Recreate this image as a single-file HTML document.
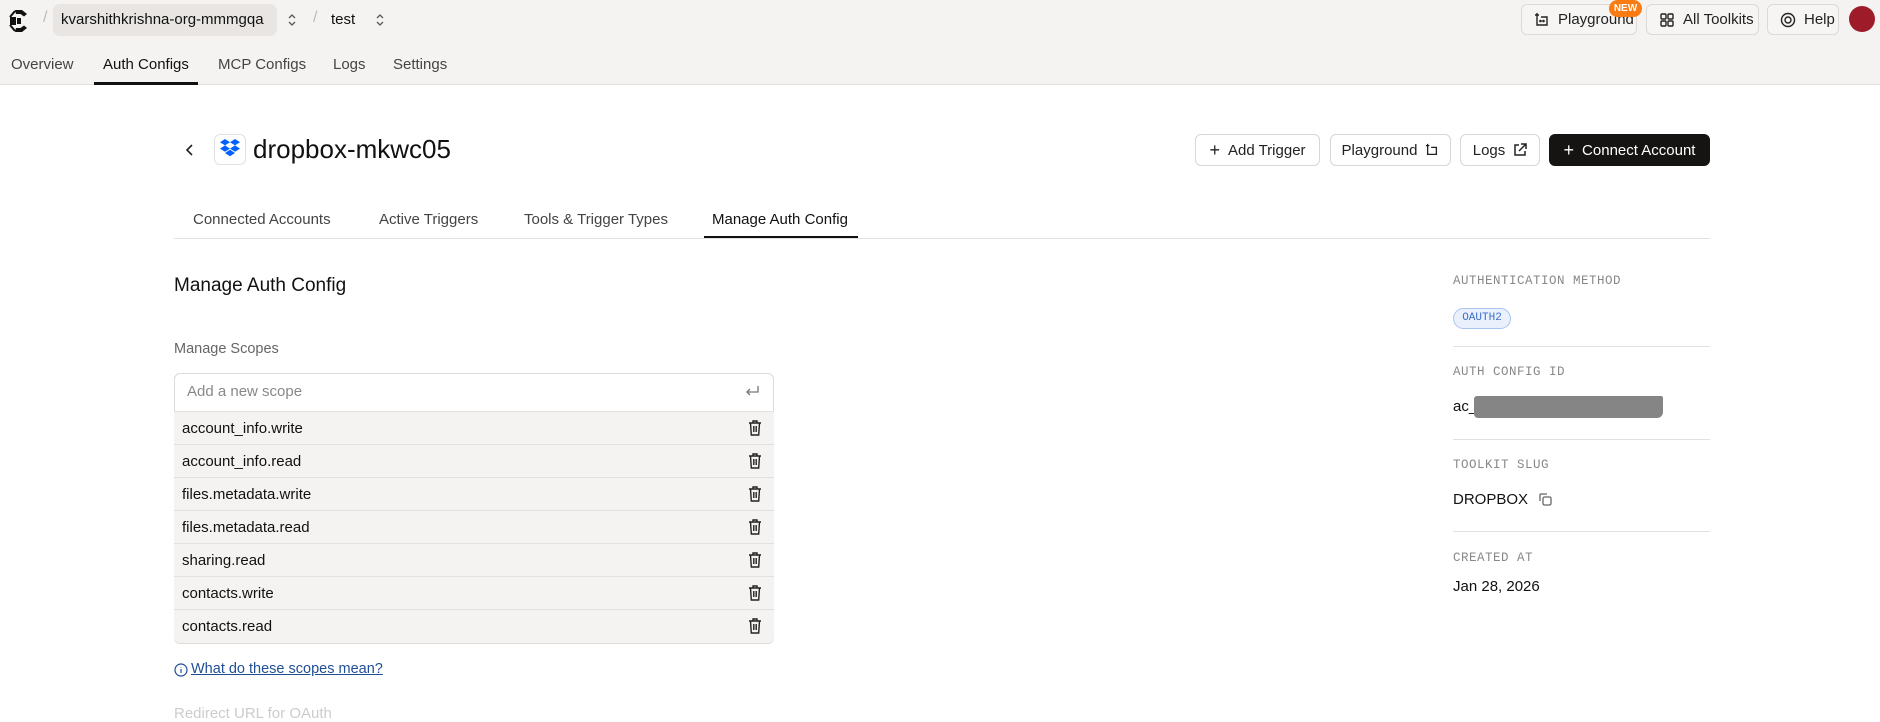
<!DOCTYPE html>
<html><head><meta charset="utf-8"><style>
*{box-sizing:border-box;margin:0;padding:0}
body{width:1880px;height:709px;overflow:hidden;background:#fff;font-family:"Liberation Sans",sans-serif;color:#111;position:relative}
.a{position:absolute}
.top{position:absolute;left:0;top:0;width:1880px;height:85px;background:#f4f3f1;border-bottom:1px solid #e2dfdc}
.nav{position:absolute;top:56px;font-size:15px;color:#444}
.hbtn{position:absolute;top:4px;height:31px;border:1px solid #dcd9d6;border-radius:6px;background:#f6f5f3;font-size:15px;color:#222;display:flex;align-items:center;padding-left:12px;gap:8px}
.btn{position:absolute;top:134px;height:32px;border:1px solid #d9d6d3;border-radius:6px;background:#fff;font-size:15px;color:#222;display:flex;align-items:center;justify-content:center;gap:8px}
.tab{position:absolute;top:211px;font-size:15px;color:#444}
.lab{position:absolute;left:1453px;font-family:"Liberation Mono",monospace;font-size:12.5px;color:#888;letter-spacing:0.5px}
.val{position:absolute;left:1453px;font-size:15px;color:#111}
.hr{position:absolute;left:1453px;width:257px;height:1px;background:#e3e1df}
.row{position:absolute;left:174px;width:600px;height:33px;background:#f4f3f1;border-top:1px solid #e3e1df;font-size:15px;display:flex;align-items:center;padding-left:8px}
.row svg{position:absolute;right:12px;top:8px}
</style></head><body>
<div class="top"></div>
<svg class="a" style="left:8px;top:9px" width="22" height="24" viewBox="0 0 22 24"><path d="M7 1h7l5 4-3 2.5L12.5 5H8z M2 8h6v8H2z M8 19h4.5l3.5-2.5 3 2.5-5 4H7z M9 9h4v6H9z" fill="#111"/><path d="M2 8l5-6M2 16l5 6" stroke="#111" stroke-width="2"/></svg>
<div class="a" style="left:43px;top:9px;color:#bbb;font-size:16px">/</div>
<div class="a" style="left:53px;top:4px;width:224px;height:32px;background:#e8e5e2;border-radius:7px"></div>
<div class="a" style="left:61px;top:11px;font-size:15px;color:#111">kvarshithkrishna-org-mmmgqa</div>
<svg class="a" style="left:286px;top:13px" width="12" height="14" viewBox="0 0 12 14"><path d="M3 5l3-3 3 3M3 9l3 3 3-3" stroke="#555" stroke-width="1.3" fill="none"/></svg>
<div class="a" style="left:313px;top:9px;color:#bbb;font-size:16px">/</div>
<div class="a" style="left:331px;top:11px;font-size:15px;color:#111">test</div>
<svg class="a" style="left:374px;top:13px" width="12" height="14" viewBox="0 0 12 14"><path d="M3 5l3-3 3 3M3 9l3 3 3-3" stroke="#555" stroke-width="1.3" fill="none"/></svg>
<div class="nav" style="left:11px">Overview</div>
<div class="nav" style="left:103px;color:#111">Auth Configs</div>
<div class="a" style="left:94px;top:82px;width:104px;height:3px;background:#111"></div>
<div class="nav" style="left:218px">MCP Configs</div>
<div class="nav" style="left:333px">Logs</div>
<div class="nav" style="left:393px">Settings</div>

<div class="hbtn" style="left:1521px;width:116px"><svg width="16" height="16" viewBox="0 0 16 16" fill="none" stroke="#222" stroke-width="1.4"><path d="M3 5v8h10V5H7M3 1v4M1 3h4"/><circle cx="6.5" cy="9" r=".6" fill="#222"/><circle cx="9.5" cy="9" r=".6" fill="#222"/></svg>Playground</div>
<div class="a" style="left:1609px;top:0;width:33px;height:17px;background:#f97b12;border-radius:9px;color:#fff;font-size:10px;font-weight:bold;text-align:center;line-height:17px">NEW</div>
<div class="hbtn" style="left:1646px;width:113px"><svg width="16" height="16" viewBox="0 0 16 16" fill="none" stroke="#222" stroke-width="1.4"><rect x="2" y="2" width="5" height="5" rx="1"/><rect x="9" y="2" width="5" height="5" rx="1"/><rect x="2" y="9" width="5" height="5" rx="1"/><rect x="9" y="9" width="5" height="5" rx="1"/></svg>All Toolkits</div>
<div class="hbtn" style="left:1767px;width:72px"><svg width="16" height="16" viewBox="0 0 16 16" fill="none" stroke="#222" stroke-width="1.4"><circle cx="8" cy="8" r="6.5"/><circle cx="8" cy="8" r="3"/></svg>Help</div>
<div class="a" style="left:1849px;top:6px;width:26px;height:26px;border-radius:50%;background:#9e1b2a"></div>

<svg class="a" style="left:184px;top:143px" width="12" height="14" viewBox="0 0 12 14"><path d="M8 2L3 7l5 5" stroke="#222" stroke-width="1.6" fill="none"/></svg>
<div class="a" style="left:214px;top:134px;width:32px;height:31px;border:1px solid #e3e1df;border-radius:6px;background:#fff"></div>
<svg class="a" style="left:219px;top:139px" width="22" height="21" viewBox="0 0 22 21"><path fill="#0061fe" d="M6 0l5 3.2-5 3.2-5-3.2zM16 0l5 3.2-5 3.2-5-3.2zM1 9.6l5-3.2 5 3.2-5 3.2zM16 6.4l5 3.2-5 3.2-5-3.2zM6 14l5-3.2 5 3.2-5 3.2z"/></svg>
<div class="a" style="left:253px;top:134px;font-size:26px;color:#111">dropbox-mkwc05</div>

<div class="btn" style="left:1195px;width:125px"><span style="font-size:18px">+</span>Add Trigger</div>
<div class="btn" style="left:1330px;width:121px">Playground <svg width="14" height="14" viewBox="0 0 16 16" fill="none" stroke="#222" stroke-width="1.5"><path d="M3 5v8h10V5H7M3 1v4M1 3h4"/></svg></div>
<div class="btn" style="left:1460px;width:80px">Logs <svg width="14" height="14" viewBox="0 0 14 14" fill="none" stroke="#222" stroke-width="1.5"><path d="M6 2H2v10h10V8M8 1h5v5M13 1L6 8"/></svg></div>
<div class="btn" style="left:1549px;width:161px;background:#161412;border-color:#161412;color:#fff"><span style="font-size:18px">+</span>Connect Account</div>

<div class="tab" style="left:193px">Connected Accounts</div>
<div class="tab" style="left:379px">Active Triggers</div>
<div class="tab" style="left:524px">Tools &amp; Trigger Types</div>
<div class="tab" style="left:712px;color:#111">Manage Auth Config</div>
<div class="a" style="left:174px;top:238px;width:1536px;height:1px;background:#e3e1df"></div>
<div class="a" style="left:704px;top:236px;width:154px;height:2px;background:#111"></div>

<div class="a" style="left:174px;top:275px;font-size:19px;color:#111">Manage Auth Config</div>
<div class="a" style="left:174px;top:341px;font-size:14.5px;color:#666">Manage Scopes</div>
<div class="a" style="left:174px;top:373px;width:600px;height:271px;border:1px solid #dedbd8;border-radius:6px;background:#f4f3f1;overflow:hidden"></div>
<div class="a" style="left:175px;top:374px;width:598px;height:37px;background:#fff;border-radius:6px 6px 0 0"></div>
<div class="a" style="left:187px;top:383px;font-size:15px;color:#888">Add a new scope</div>
<svg class="a" style="left:744px;top:385px" width="16" height="14" viewBox="0 0 16 14"><path d="M14 1v6H3M6 4L3 7l3 3" stroke="#777" stroke-width="1.3" fill="none"/></svg>

<div class="row" style="top:411px">account_info.write<svg width="14" height="16" viewBox="0 0 14 16" fill="none" stroke="#222" stroke-width="1.4"><path d="M1 3h12M5 3V1h4v2M2.5 3l.8 12h7.4l.8-12M5.8 6v6M8.2 6v6"/></svg></div>
<div class="row" style="top:444px">account_info.read<svg width="14" height="16" viewBox="0 0 14 16" fill="none" stroke="#222" stroke-width="1.4"><path d="M1 3h12M5 3V1h4v2M2.5 3l.8 12h7.4l.8-12M5.8 6v6M8.2 6v6"/></svg></div>
<div class="row" style="top:477px">files.metadata.write<svg width="14" height="16" viewBox="0 0 14 16" fill="none" stroke="#222" stroke-width="1.4"><path d="M1 3h12M5 3V1h4v2M2.5 3l.8 12h7.4l.8-12M5.8 6v6M8.2 6v6"/></svg></div>
<div class="row" style="top:510px">files.metadata.read<svg width="14" height="16" viewBox="0 0 14 16" fill="none" stroke="#222" stroke-width="1.4"><path d="M1 3h12M5 3V1h4v2M2.5 3l.8 12h7.4l.8-12M5.8 6v6M8.2 6v6"/></svg></div>
<div class="row" style="top:543px">sharing.read<svg width="14" height="16" viewBox="0 0 14 16" fill="none" stroke="#222" stroke-width="1.4"><path d="M1 3h12M5 3V1h4v2M2.5 3l.8 12h7.4l.8-12M5.8 6v6M8.2 6v6"/></svg></div>
<div class="row" style="top:576px">contacts.write<svg width="14" height="16" viewBox="0 0 14 16" fill="none" stroke="#222" stroke-width="1.4"><path d="M1 3h12M5 3V1h4v2M2.5 3l.8 12h7.4l.8-12M5.8 6v6M8.2 6v6"/></svg></div>
<div class="row" style="top:609px;height:34px;border-radius:0 0 6px 6px">contacts.read<svg width="14" height="16" viewBox="0 0 14 16" fill="none" stroke="#222" stroke-width="1.4"><path d="M1 3h12M5 3V1h4v2M2.5 3l.8 12h7.4l.8-12M5.8 6v6M8.2 6v6"/></svg></div>

<svg class="a" style="left:174px;top:663px" width="14" height="14" viewBox="0 0 14 14" fill="none" stroke="#1f4e96" stroke-width="1.2"><circle cx="7" cy="7" r="6"/><path d="M7 6v4M7 4v.5"/></svg>
<div class="a" style="left:191px;top:661px;font-size:14.5px;color:#1f4e96;text-decoration:underline">What do these scopes mean?</div>
<div class="a" style="left:174px;top:705px;font-size:15px;color:#ccc">Redirect URL for OAuth</div>

<div class="lab" style="top:274px">AUTHENTICATION METHOD</div>
<div class="a" style="left:1453px;top:308px;width:58px;height:21px;border:1px solid #a9c4f0;border-radius:11px;background:#eaf1fd;color:#3b6fc9;font-family:'Liberation Mono',monospace;font-size:11px;text-align:center;line-height:19px">OAUTH2</div>
<div class="hr" style="top:346px"></div>
<div class="lab" style="top:365px">AUTH CONFIG ID</div>
<div class="val" style="top:398px">ac_</div>
<div class="a" style="left:1474px;top:396px;width:189px;height:22px;background:#858585;border-radius:3px 2px 6px 4px"></div>
<div class="hr" style="top:439px"></div>
<div class="lab" style="top:458px">TOOLKIT SLUG</div>
<div class="val" style="top:491px">DROPBOX</div>
<svg class="a" style="left:1538px;top:492px" width="15" height="15" viewBox="0 0 15 15" fill="none" stroke="#666" stroke-width="1.3"><rect x="5" y="5" width="8" height="8" rx="1.5"/><path d="M2 9V3a1 1 0 011-1h6"/></svg>
<div class="hr" style="top:531px"></div>
<div class="lab" style="top:551px">CREATED AT</div>
<div class="val" style="top:578px">Jan 28, 2026</div>
</body></html>
